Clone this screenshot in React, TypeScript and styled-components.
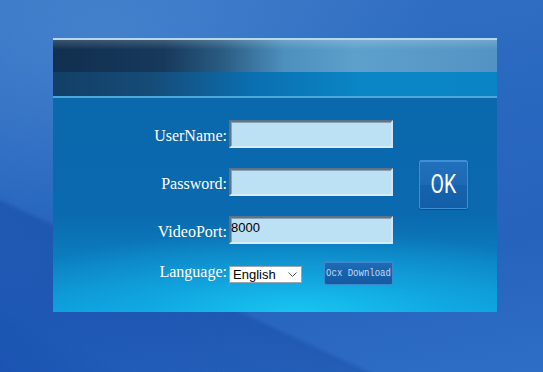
import React from "react";
import styled, { createGlobalStyle } from "styled-components";

const Global = createGlobalStyle`
  html, body { margin: 0; padding: 0; }
  body { width: 543px; height: 372px; overflow: hidden; }
`;

const Desktop = styled.div`
  width: 543px;
  height: 372px;
  box-sizing: border-box;
  padding: 38px 0 0 53px;
  background:
    linear-gradient(205deg, rgba(0,30,110,0) 72%, rgba(0,40,130,0.22) 73%, rgba(0,40,130,0) 90%),
    linear-gradient(28deg, rgba(10,60,160,0.45) 0%, rgba(10,60,160,0) 28%),
    radial-gradient(ellipse 60% 50% at 20% 10%, rgba(90,150,215,0.45) 0%, rgba(90,150,215,0) 100%),
    linear-gradient(170deg, #3572c4 0%, #2a69c0 35%, #2563bd 70%, #2f6ec6 100%);
`;

const Panel = styled.div`
  width: 444px;
  height: 274px;
  display: flex;
  flex-direction: column;
`;

const Header = styled.div`
  height: 58px;
  display: flex;
  flex-direction: column;
  border-bottom: 2px solid #4da8dc;
`;

const HeaderTop = styled.div`
  height: 34px;
  border-top: 2px solid #b8d8ea;
  box-sizing: border-box;
  background:
    linear-gradient(180deg, rgba(255,255,255,0.18) 0%, rgba(255,255,255,0) 30%),
    linear-gradient(90deg, #112f4f 0%, #17395c 25%, #2a5b82 38%, #4d8fbd 52%, #5ea0cc 68%, #5393c4 100%);
`;

const HeaderBottom = styled.div`
  flex: 1;
  background: linear-gradient(90deg, #123f66 0%, #164b78 22%, #0a6fb0 45%, #0a86c6 70%, #0a84c4 100%);
`;

const Body = styled.div`
  flex: 1;
  padding-top: 22px;
  background:
    radial-gradient(ellipse 75% 38% at 55% 100%, #19c4f0 0%, rgba(20,180,235,0.6) 45%, rgba(20,170,230,0) 100%),
    linear-gradient(180deg, #0a68ad 0%, #0a6aaf 55%, #0c86c6 85%, #0a9ad8 100%);
`;

const Form = styled.div`
  display: grid;
  grid-template-columns: 176px 164px 49px;
  grid-template-rows: 28px 28px 28px 24px;
  row-gap: 20px;
`;

const Label = styled.label<{ $pad?: number; $shift?: number }>`
  align-self: end;
  justify-self: end;
  padding-right: 2px;
  padding-bottom: ${(p) => p.$pad ?? 3}px;
  transform: translateY(${(p) => p.$shift ?? 0}px);
  font-family: "Liberation Serif", "Times New Roman", serif;
  font-size: 16px;
  line-height: 18px;
  color: #ffffff;
`;

const Field = styled.input`
  box-sizing: border-box;
  width: 164px;
  height: 28px;
  margin: 0;
  padding: 0 0 6px 0;
  background: #bde1f4;
  border: 2px solid;
  border-color: #5c7388 #cfe6f4 #d8ecf8 #5c7388;
  box-shadow: inset 1px 1px 0 #8aa2b6;
  outline: none;
  font-family: "Liberation Sans", Arial, sans-serif;
  font-size: 13px;
  line-height: 14px;
  color: #000;
`;

const OkCell = styled.div`
  grid-column: 3;
  grid-row: 1 / 4;
  align-self: center;
  margin-top: 5px;
  margin-left: 26px;
`;

const OkButton = styled.button`
  width: 49px;
  height: 49px;
  padding: 0;
  border: 1px solid #3f8fd6;
  border-radius: 2px;
  background: linear-gradient(180deg, #2170bb 0%, #1c6ab5 50%, #1562ad 52%, #125ea9 100%);
  box-shadow: inset 0 1px 0 rgba(140,200,250,0.35), 0 1px 1px rgba(0,30,80,0.35);
  color: #fff;
  font-family: Roboto, "Liberation Sans", sans-serif;
  font-size: 25px;
  display: flex;
  align-items: center;
  justify-content: center;
`;

const OkText = styled.span`
  display: inline-block;
  transform: scaleX(0.78);
  margin-top: -1px;
`;

const LangCell = styled.div`
  display: flex;
  align-items: center;
  gap: 22px;
  grid-column: 2 / 4;
  transform: translateY(-3px);
`;

const SelectWrap = styled.div`
  position: relative;
  width: 73px;
  height: 17px;
`;

const Select = styled.select`
  appearance: none;
  -webkit-appearance: none;
  box-sizing: border-box;
  width: 73px;
  height: 17px;
  margin: 0;
  padding: 0 0 0 3px;
  border: 1px solid #9aa6b2;
  border-radius: 0;
  background: #ffffff;
  font-family: "Liberation Sans", Arial, sans-serif;
  font-size: 13px;
  line-height: 15px;
  color: #000;
  outline: none;
`;

const Chevron = styled.svg`
  position: absolute;
  right: 5px;
  top: 7px;
  pointer-events: none;
`;

const OcxButton = styled.button`
  box-sizing: border-box;
  width: 69px;
  height: 24px;
  padding: 0;
  border: 1px solid #3c88cc;
  border-radius: 2px;
  background: linear-gradient(180deg, #1f6cb6 0%, #1861ab 50%, #155aa3 100%);
  box-shadow: inset 0 1px 0 rgba(140,200,250,0.3);
  color: #c4dcf2;
  font-family: "Liberation Mono", "DejaVu Sans Mono", monospace;
  font-size: 9px;
  line-height: 22px;
  white-space: nowrap;
`;

const OcxText = styled.span`
  display: inline-block;
  transform: scaleY(1.3);
`;

export default function App() {
  return (
    <>
      <Global />
      <Desktop>
        <Panel>
          <Header>
            <HeaderTop />
            <HeaderBottom />
          </Header>
          <Body>
            <Form>
              <Label>UserName:</Label>
              <Field type="text" />
              <OkCell>
                <OkButton>
                  <OkText>OK</OkText>
                </OkButton>
              </OkCell>
              <Label>Password:</Label>
              <Field type="password" />
              <Label>VideoPort:</Label>
              <Field type="text" defaultValue="8000" />
              <Label $pad={3} $shift={-4}>Language:</Label>
              <LangCell>
                <SelectWrap>
                  <Select defaultValue="English">
                    <option>English</option>
                  </Select>
                  <Chevron width="9" height="5" viewBox="0 0 9 5">
                    <path d="M0.5 0.5 L4.5 4.5 L8.5 0.5" fill="none" stroke="#555" strokeWidth="1" />
                  </Chevron>
                </SelectWrap>
                <OcxButton>
                  <OcxText>Ocx Download</OcxText>
                </OcxButton>
              </LangCell>
            </Form>
          </Body>
        </Panel>
      </Desktop>
    </>
  );
}
